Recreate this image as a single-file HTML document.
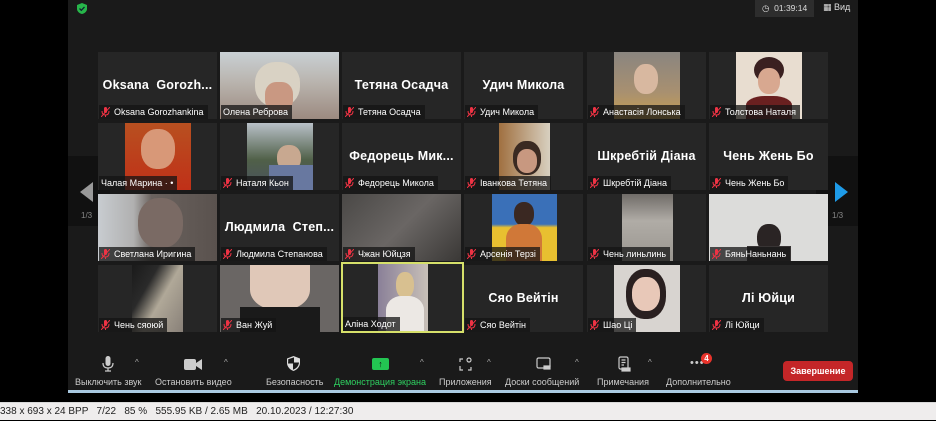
<!DOCTYPE html>
<html><head><meta charset="utf-8"><style>
*{margin:0;padding:0;box-sizing:border-box}
body{width:936px;height:420px;background:#000;position:relative;overflow:hidden;font-family:"Liberation Sans","DejaVu Sans",sans-serif}
#win{position:absolute;left:68px;top:0;width:790px;height:391px;background:#1a1a1a}
.t{position:absolute;width:119px;height:67px;background:#262626;overflow:hidden}
.big{position:absolute;left:0;right:0;top:26px;text-align:center;color:#fff;font-weight:bold;font-size:12.5px;white-space:nowrap;letter-spacing:.2px}
.lb{position:absolute;left:1px;bottom:0;height:14px;background:rgba(20,20,20,.75);color:#fff;font-size:9px;line-height:14px;padding:0 4px 0 2px;white-space:nowrap}
.m{display:inline-block;width:9px;height:10px;vertical-align:-2px;margin-right:4px}
.ph{position:absolute;top:0;height:67px}
.tb{position:absolute;top:354px;color:#ccc;font-size:9px;text-align:center;white-space:nowrap}
.car{position:absolute;top:358px;color:#aaa;font-size:8px}
</style></head><body>
<div id="win">
<svg style="position:absolute;left:9px;top:3px" width="10" height="11" viewBox="0 0 10 11"><path d="M5 0L10 2V6C10 8.5 7.5 10.5 5 11C2.5 10.5 0 8.5 0 6V2Z" fill="#27b64a"/><path d="M2.5 5.5L4.3 7.3L7.5 4" stroke="#123" stroke-width="1.3" fill="none"/></svg>
<div style="position:absolute;left:687px;top:0;width:59px;height:17px;background:#2d2d2d;color:#ddd;font-size:8.5px;line-height:17px;padding-left:7px">◷ &nbsp;01:39:14</div>
<div style="position:absolute;left:755px;top:2px;color:#ddd;font-size:9px">▦ Вид</div>
<div style="position:absolute;left:0;top:156px;width:42px;height:70px;background:#111"></div>
<div style="position:absolute;left:12px;top:182px;width:0;height:0;border-top:10px solid transparent;border-bottom:10px solid transparent;border-right:13px solid #999"></div>
<div style="position:absolute;left:13px;top:211px;color:#888;font-size:8px">1/3</div>
<div style="position:absolute;left:748px;top:156px;width:42px;height:70px;background:#111"></div>
<div style="position:absolute;left:767px;top:182px;width:0;height:0;border-top:10px solid transparent;border-bottom:10px solid transparent;border-left:13px solid #1e9be8"></div>
<div style="position:absolute;left:764px;top:211px;color:#888;font-size:8px">1/3</div>
</div>

<!-- Row 1 -->
<div class="t" style="left:98px;top:52px"><div class="big">Oksana &nbsp;Gorozh...</div><div class="lb"><svg class="m" viewBox="0 0 9 10"><rect x="3" y="0" width="3" height="6" rx="1.5" fill="#e34"/><path d="M1 4Q1 8 4.5 8Q8 8 8 4M4.5 8V10M0 10L9 0" stroke="#e34" stroke-width="1" fill="none"/></svg>Oksana Gorozhankina</div></div>
<div class="t" style="left:220px;top:52px;background:linear-gradient(180deg,#c9d0d4 0%,#b9b4ae 45%,#9c8a80 100%)"><div style="position:absolute;left:35px;top:10px;width:45px;height:45px;border-radius:45%;background:#d9d2c4"></div><div style="position:absolute;left:45px;top:30px;width:28px;height:30px;border-radius:40%;background:#c99882"></div><div class="lb">Олена Реброва</div></div>
<div class="t" style="left:342px;top:52px"><div class="big">Тетяна Осадча</div><div class="lb"><svg class="m" viewBox="0 0 9 10"><rect x="3" y="0" width="3" height="6" rx="1.5" fill="#e34"/><path d="M1 4Q1 8 4.5 8Q8 8 8 4M4.5 8V10M0 10L9 0" stroke="#e34" stroke-width="1" fill="none"/></svg>Тетяна Осадча</div></div>
<div class="t" style="left:464px;top:52px"><div class="big">Удич Микола</div><div class="lb"><svg class="m" viewBox="0 0 9 10"><rect x="3" y="0" width="3" height="6" rx="1.5" fill="#e34"/><path d="M1 4Q1 8 4.5 8Q8 8 8 4M4.5 8V10M0 10L9 0" stroke="#e34" stroke-width="1" fill="none"/></svg>Удич Микола</div></div>
<div class="t" style="left:587px;top:52px"><div class="ph" style="left:27px;width:66px;background:linear-gradient(180deg,#8a8580,#a89070 60%,#c8a050)"><div style="position:absolute;left:20px;top:12px;width:24px;height:30px;border-radius:45%;background:#d8b8a0"></div></div><div class="lb"><svg class="m" viewBox="0 0 9 10"><rect x="3" y="0" width="3" height="6" rx="1.5" fill="#e34"/><path d="M1 4Q1 8 4.5 8Q8 8 8 4M4.5 8V10M0 10L9 0" stroke="#e34" stroke-width="1" fill="none"/></svg>Анастасія Лонська</div></div>
<div class="t" style="left:709px;top:52px"><div class="ph" style="left:27px;width:66px;background:#e8ddd0"><div style="position:absolute;left:18px;top:5px;width:30px;height:26px;border-radius:50%;background:#3a2020"></div><div style="position:absolute;left:22px;top:16px;width:22px;height:26px;border-radius:45%;background:#d8a890"></div><div style="position:absolute;left:10px;top:44px;width:46px;height:23px;border-radius:40% 40% 0 0;background:#6a2020"></div></div><div class="lb"><svg class="m" viewBox="0 0 9 10"><rect x="3" y="0" width="3" height="6" rx="1.5" fill="#e34"/><path d="M1 4Q1 8 4.5 8Q8 8 8 4M4.5 8V10M0 10L9 0" stroke="#e34" stroke-width="1" fill="none"/></svg>Толстова Наталя</div></div>

<!-- Row 2 -->
<div class="t" style="left:98px;top:123px"><div class="ph" style="left:27px;width:66px;background:linear-gradient(180deg,#b85020,#c03018)"><div style="position:absolute;left:16px;top:6px;width:34px;height:40px;border-radius:45%;background:#d89878"></div></div><div class="lb">Чалая Марина · •</div></div>
<div class="t" style="left:220px;top:123px"><div class="ph" style="left:27px;width:66px;background:linear-gradient(180deg,#b8c0c8,#506048 55%,#485060)"><div style="position:absolute;left:30px;top:22px;width:24px;height:26px;border-radius:45%;background:#c8a890"></div><div style="position:absolute;left:22px;top:42px;width:44px;height:25px;background:#6878a0"></div></div><div class="lb"><svg class="m" viewBox="0 0 9 10"><rect x="3" y="0" width="3" height="6" rx="1.5" fill="#e34"/><path d="M1 4Q1 8 4.5 8Q8 8 8 4M4.5 8V10M0 10L9 0" stroke="#e34" stroke-width="1" fill="none"/></svg>Наталя Кьон</div></div>
<div class="t" style="left:342px;top:123px"><div class="big">Федорець Мик...</div><div class="lb"><svg class="m" viewBox="0 0 9 10"><rect x="3" y="0" width="3" height="6" rx="1.5" fill="#e34"/><path d="M1 4Q1 8 4.5 8Q8 8 8 4M4.5 8V10M0 10L9 0" stroke="#e34" stroke-width="1" fill="none"/></svg>Федорець Микола</div></div>
<div class="t" style="left:464px;top:123px"><div class="ph" style="left:35px;width:51px;background:linear-gradient(90deg,#a07040,#d8d0c0)"><div style="position:absolute;left:14px;top:18px;width:28px;height:34px;border-radius:45%;background:#3a2a22"></div><div style="position:absolute;left:18px;top:26px;width:20px;height:24px;border-radius:45%;background:#c89880"></div></div><div class="lb"><svg class="m" viewBox="0 0 9 10"><rect x="3" y="0" width="3" height="6" rx="1.5" fill="#e34"/><path d="M1 4Q1 8 4.5 8Q8 8 8 4M4.5 8V10M0 10L9 0" stroke="#e34" stroke-width="1" fill="none"/></svg>Іванкова Тетяна</div></div>
<div class="t" style="left:587px;top:123px"><div class="big">Шкребтій Діана</div><div class="lb"><svg class="m" viewBox="0 0 9 10"><rect x="3" y="0" width="3" height="6" rx="1.5" fill="#e34"/><path d="M1 4Q1 8 4.5 8Q8 8 8 4M4.5 8V10M0 10L9 0" stroke="#e34" stroke-width="1" fill="none"/></svg>Шкребтій Діана</div></div>
<div class="t" style="left:709px;top:123px"><div class="big">Чень Жень Бо</div><div class="lb"><svg class="m" viewBox="0 0 9 10"><rect x="3" y="0" width="3" height="6" rx="1.5" fill="#e34"/><path d="M1 4Q1 8 4.5 8Q8 8 8 4M4.5 8V10M0 10L9 0" stroke="#e34" stroke-width="1" fill="none"/></svg>Чень Жень Бо</div></div>

<!-- Row 3 -->
<div class="t" style="left:98px;top:194px;background:linear-gradient(90deg,#c8ccd0 0%,#b0b0b0 30%,#6a625e 45%,#5a524e 100%)"><div style="position:absolute;left:40px;top:4px;width:45px;height:50px;border-radius:45%;background:#7a6a64"></div><div class="lb"><svg class="m" viewBox="0 0 9 10"><rect x="3" y="0" width="3" height="6" rx="1.5" fill="#e34"/><path d="M1 4Q1 8 4.5 8Q8 8 8 4M4.5 8V10M0 10L9 0" stroke="#e34" stroke-width="1" fill="none"/></svg>Светлана Иригина</div></div>
<div class="t" style="left:220px;top:194px"><div class="big">Людмила &nbsp;Степ...</div><div class="lb"><svg class="m" viewBox="0 0 9 10"><rect x="3" y="0" width="3" height="6" rx="1.5" fill="#e34"/><path d="M1 4Q1 8 4.5 8Q8 8 8 4M4.5 8V10M0 10L9 0" stroke="#e34" stroke-width="1" fill="none"/></svg>Людмила Степанова</div></div>
<div class="t" style="left:342px;top:194px;background:linear-gradient(135deg,#4a4846,#6a6664 50%,#3a3836)"><div class="lb"><svg class="m" viewBox="0 0 9 10"><rect x="3" y="0" width="3" height="6" rx="1.5" fill="#e34"/><path d="M1 4Q1 8 4.5 8Q8 8 8 4M4.5 8V10M0 10L9 0" stroke="#e34" stroke-width="1" fill="none"/></svg>Чжан Юйцзя</div></div>
<div class="t" style="left:464px;top:194px"><div class="ph" style="left:28px;width:65px;background:linear-gradient(180deg,#3a70b8 0%,#3a70b8 45%,#e8c030 50%,#e8c030 100%)"><div style="position:absolute;left:22px;top:8px;width:20px;height:24px;border-radius:45%;background:#3a2822"></div><div style="position:absolute;left:14px;top:30px;width:36px;height:37px;border-radius:40% 40% 0 0;background:#d07838"></div></div><div class="lb"><svg class="m" viewBox="0 0 9 10"><rect x="3" y="0" width="3" height="6" rx="1.5" fill="#e34"/><path d="M1 4Q1 8 4.5 8Q8 8 8 4M4.5 8V10M0 10L9 0" stroke="#e34" stroke-width="1" fill="none"/></svg>Арсенія Терзі</div></div>
<div class="t" style="left:587px;top:194px"><div class="ph" style="left:35px;width:51px;background:linear-gradient(180deg,#706c68,#b0aca6 40%,#9a9690)"></div><div class="lb"><svg class="m" viewBox="0 0 9 10"><rect x="3" y="0" width="3" height="6" rx="1.5" fill="#e34"/><path d="M1 4Q1 8 4.5 8Q8 8 8 4M4.5 8V10M0 10L9 0" stroke="#e34" stroke-width="1" fill="none"/></svg>Чень линьлинь</div></div>
<div class="t" style="left:709px;top:194px;background:#dcdcda"><div style="position:absolute;left:48px;top:30px;width:24px;height:28px;border-radius:45%;background:#2a2424"></div><div style="position:absolute;left:38px;top:52px;width:44px;height:15px;background:#383434"></div><div class="lb"><svg class="m" viewBox="0 0 9 10"><rect x="3" y="0" width="3" height="6" rx="1.5" fill="#e34"/><path d="M1 4Q1 8 4.5 8Q8 8 8 4M4.5 8V10M0 10L9 0" stroke="#e34" stroke-width="1" fill="none"/></svg>БяньНаньнань</div></div>

<!-- Row 4 -->
<div class="t" style="left:98px;top:265px"><div class="ph" style="left:34px;width:51px;background:linear-gradient(120deg,#1a1a1a 0%,#2a2a2a 30%,#b0a898 55%,#888078 100%)"></div><div class="lb"><svg class="m" viewBox="0 0 9 10"><rect x="3" y="0" width="3" height="6" rx="1.5" fill="#e34"/><path d="M1 4Q1 8 4.5 8Q8 8 8 4M4.5 8V10M0 10L9 0" stroke="#e34" stroke-width="1" fill="none"/></svg>Чень сяоюй</div></div>
<div class="t" style="left:220px;top:265px;background:#6a6664"><div style="position:absolute;left:30px;top:0;width:60px;height:45px;border-radius:0 0 45% 45%;background:#e0c8b8"></div><div style="position:absolute;left:20px;top:42px;width:80px;height:25px;background:#1a1a1a"></div><div class="lb"><svg class="m" viewBox="0 0 9 10"><rect x="3" y="0" width="3" height="6" rx="1.5" fill="#e34"/><path d="M1 4Q1 8 4.5 8Q8 8 8 4M4.5 8V10M0 10L9 0" stroke="#e34" stroke-width="1" fill="none"/></svg>Ван Жуй</div></div>
<div class="t" style="left:341px;top:262px;width:123px;height:71px;border:2px solid #d6e06a;background:#262626"><div class="ph" style="left:35px;width:50px;background:linear-gradient(90deg,#8a8098,#c8c0b8)"><div style="position:absolute;left:18px;top:8px;width:18px;height:26px;border-radius:45%;background:#d8c090"></div><div style="position:absolute;left:8px;top:32px;width:38px;height:35px;border-radius:40% 40% 0 0;background:#ece8e4"></div></div><div class="lb" style="left:0">Аліна Ходот</div></div>
<div class="t" style="left:464px;top:265px"><div class="big">Сяо Вейтін</div><div class="lb"><svg class="m" viewBox="0 0 9 10"><rect x="3" y="0" width="3" height="6" rx="1.5" fill="#e34"/><path d="M1 4Q1 8 4.5 8Q8 8 8 4M4.5 8V10M0 10L9 0" stroke="#e34" stroke-width="1" fill="none"/></svg>Сяо Вейтін</div></div>
<div class="t" style="left:587px;top:265px"><div class="ph" style="left:27px;width:66px;background:#d8d4d0"><div style="position:absolute;left:12px;top:4px;width:40px;height:50px;border-radius:45%;background:#2a2020"></div><div style="position:absolute;left:18px;top:12px;width:28px;height:34px;border-radius:45%;background:#e8c8b8"></div></div><div class="lb"><svg class="m" viewBox="0 0 9 10"><rect x="3" y="0" width="3" height="6" rx="1.5" fill="#e34"/><path d="M1 4Q1 8 4.5 8Q8 8 8 4M4.5 8V10M0 10L9 0" stroke="#e34" stroke-width="1" fill="none"/></svg>Шао Ці</div></div>
<div class="t" style="left:709px;top:265px"><div class="big">Лі Юйци</div><div class="lb"><svg class="m" viewBox="0 0 9 10"><rect x="3" y="0" width="3" height="6" rx="1.5" fill="#e34"/><path d="M1 4Q1 8 4.5 8Q8 8 8 4M4.5 8V10M0 10L9 0" stroke="#e34" stroke-width="1" fill="none"/></svg>Лі Юйци</div></div>

<!-- Toolbar icons -->
<svg style="position:absolute;left:102px;top:356px" width="12" height="16" viewBox="0 0 12 16"><rect x="3.5" y="0" width="5" height="10" rx="2.5" fill="#ccc"/><path d="M1 7Q1 12 6 12Q11 12 11 7M6 12V15M3 15H9" stroke="#ccc" stroke-width="1.2" fill="none"/></svg>
<div class="car" style="left:135px">^</div>
<svg style="position:absolute;left:184px;top:359px" width="18" height="11" viewBox="0 0 18 11"><rect x="0" y="0" width="12" height="11" rx="2" fill="#ccc"/><path d="M12 4L18 0V11L12 7Z" fill="#ccc"/></svg>
<div class="car" style="left:224px">^</div>
<svg style="position:absolute;left:287px;top:356px" width="13" height="15" viewBox="0 0 13 15"><path d="M6.5 0L13 2.5V7C13 11 9.5 14 6.5 15C3.5 14 0 11 0 7V2.5Z" fill="#ddd"/><path d="M6.5 1.5V13.5M1 7H12" stroke="#1a1a1a" stroke-width="1"/><path d="M6.5 1.5V7H1.2V3.2Z" fill="#1a1a1a"/><path d="M6.5 7H11.8C11.6 10.5 8.8 12.8 6.5 13.5Z" fill="#1a1a1a"/></svg>
<div style="position:absolute;left:372px;top:358px;width:17px;height:12px;background:#23c552;border-radius:2px;color:#111;font-size:9px;line-height:12px;text-align:center;font-weight:bold">↑</div>
<div class="car" style="left:420px">^</div>
<svg style="position:absolute;left:459px;top:357px" width="13" height="14" viewBox="0 0 13 14" fill="none" stroke="#ccc" stroke-width="1.2"><path d="M1 5V2H4M9 13H12V10M1 9V13H4"/><circle cx="10" cy="3" r="2"/></svg>
<div class="car" style="left:487px">^</div>
<svg style="position:absolute;left:536px;top:357px" width="15" height="14" viewBox="0 0 15 14" fill="none" stroke="#ccc" stroke-width="1.2"><rect x="1" y="1" width="13" height="10" rx="1.5"/><rect x="8" y="9" width="6" height="3" fill="#ccc"/></svg>
<div class="car" style="left:575px">^</div>
<svg style="position:absolute;left:618px;top:356px" width="13" height="16" viewBox="0 0 13 16" fill="none" stroke="#ccc" stroke-width="1.2"><rect x="1" y="1" width="9" height="12" rx="1.5"/><path d="M3.5 4H7.5M3.5 6.5H7.5M3.5 9H6"/><rect x="4" y="12" width="8" height="3" fill="#ccc"/></svg>
<div class="car" style="left:648px">^</div>
<div style="position:absolute;left:690px;top:357px;color:#ccc;font-size:11px;letter-spacing:1px">•••</div>
<div style="position:absolute;left:701px;top:353px;width:11px;height:11px;border-radius:50%;background:#e8332b;color:#fff;font-size:8px;font-weight:bold;line-height:11px;text-align:center">4</div>

<div class="tb" style="left:75px;top:377px">Выключить звук</div>
<div class="tb" style="left:155px;top:377px">Остановить видео</div>
<div class="tb" style="left:266px;top:377px">Безопасность</div>
<div class="tb" style="left:334px;top:377px;color:#2ed060">Демонстрация экрана</div>
<div class="tb" style="left:439px;top:377px">Приложения</div>
<div class="tb" style="left:505px;top:377px">Доски сообщений</div>
<div class="tb" style="left:597px;top:377px">Примечания</div>
<div class="tb" style="left:666px;top:377px">Дополнительно</div>
<div style="position:absolute;left:783px;top:361px;width:70px;height:20px;background:#c42628;border-radius:4px;color:#fff;font-size:9px;font-weight:bold;line-height:20px;text-align:center">Завершение</div>

<div style="position:absolute;left:68px;top:390px;width:790px;height:3px;background:#a8c8e0"></div>
<div style="position:absolute;left:0;top:402px;width:936px;height:18px;background:#efeded;border-top:1px solid #d8d8d8;color:#222;font-size:10px;line-height:18px;white-space:nowrap">338 x 693 x 24 BPP &nbsp;&nbsp;7/22 &nbsp;&nbsp;85 % &nbsp;&nbsp;555.95 KB / 2.65 MB &nbsp;&nbsp;20.10.2023 / 12:27:30</div>
</body></html>
